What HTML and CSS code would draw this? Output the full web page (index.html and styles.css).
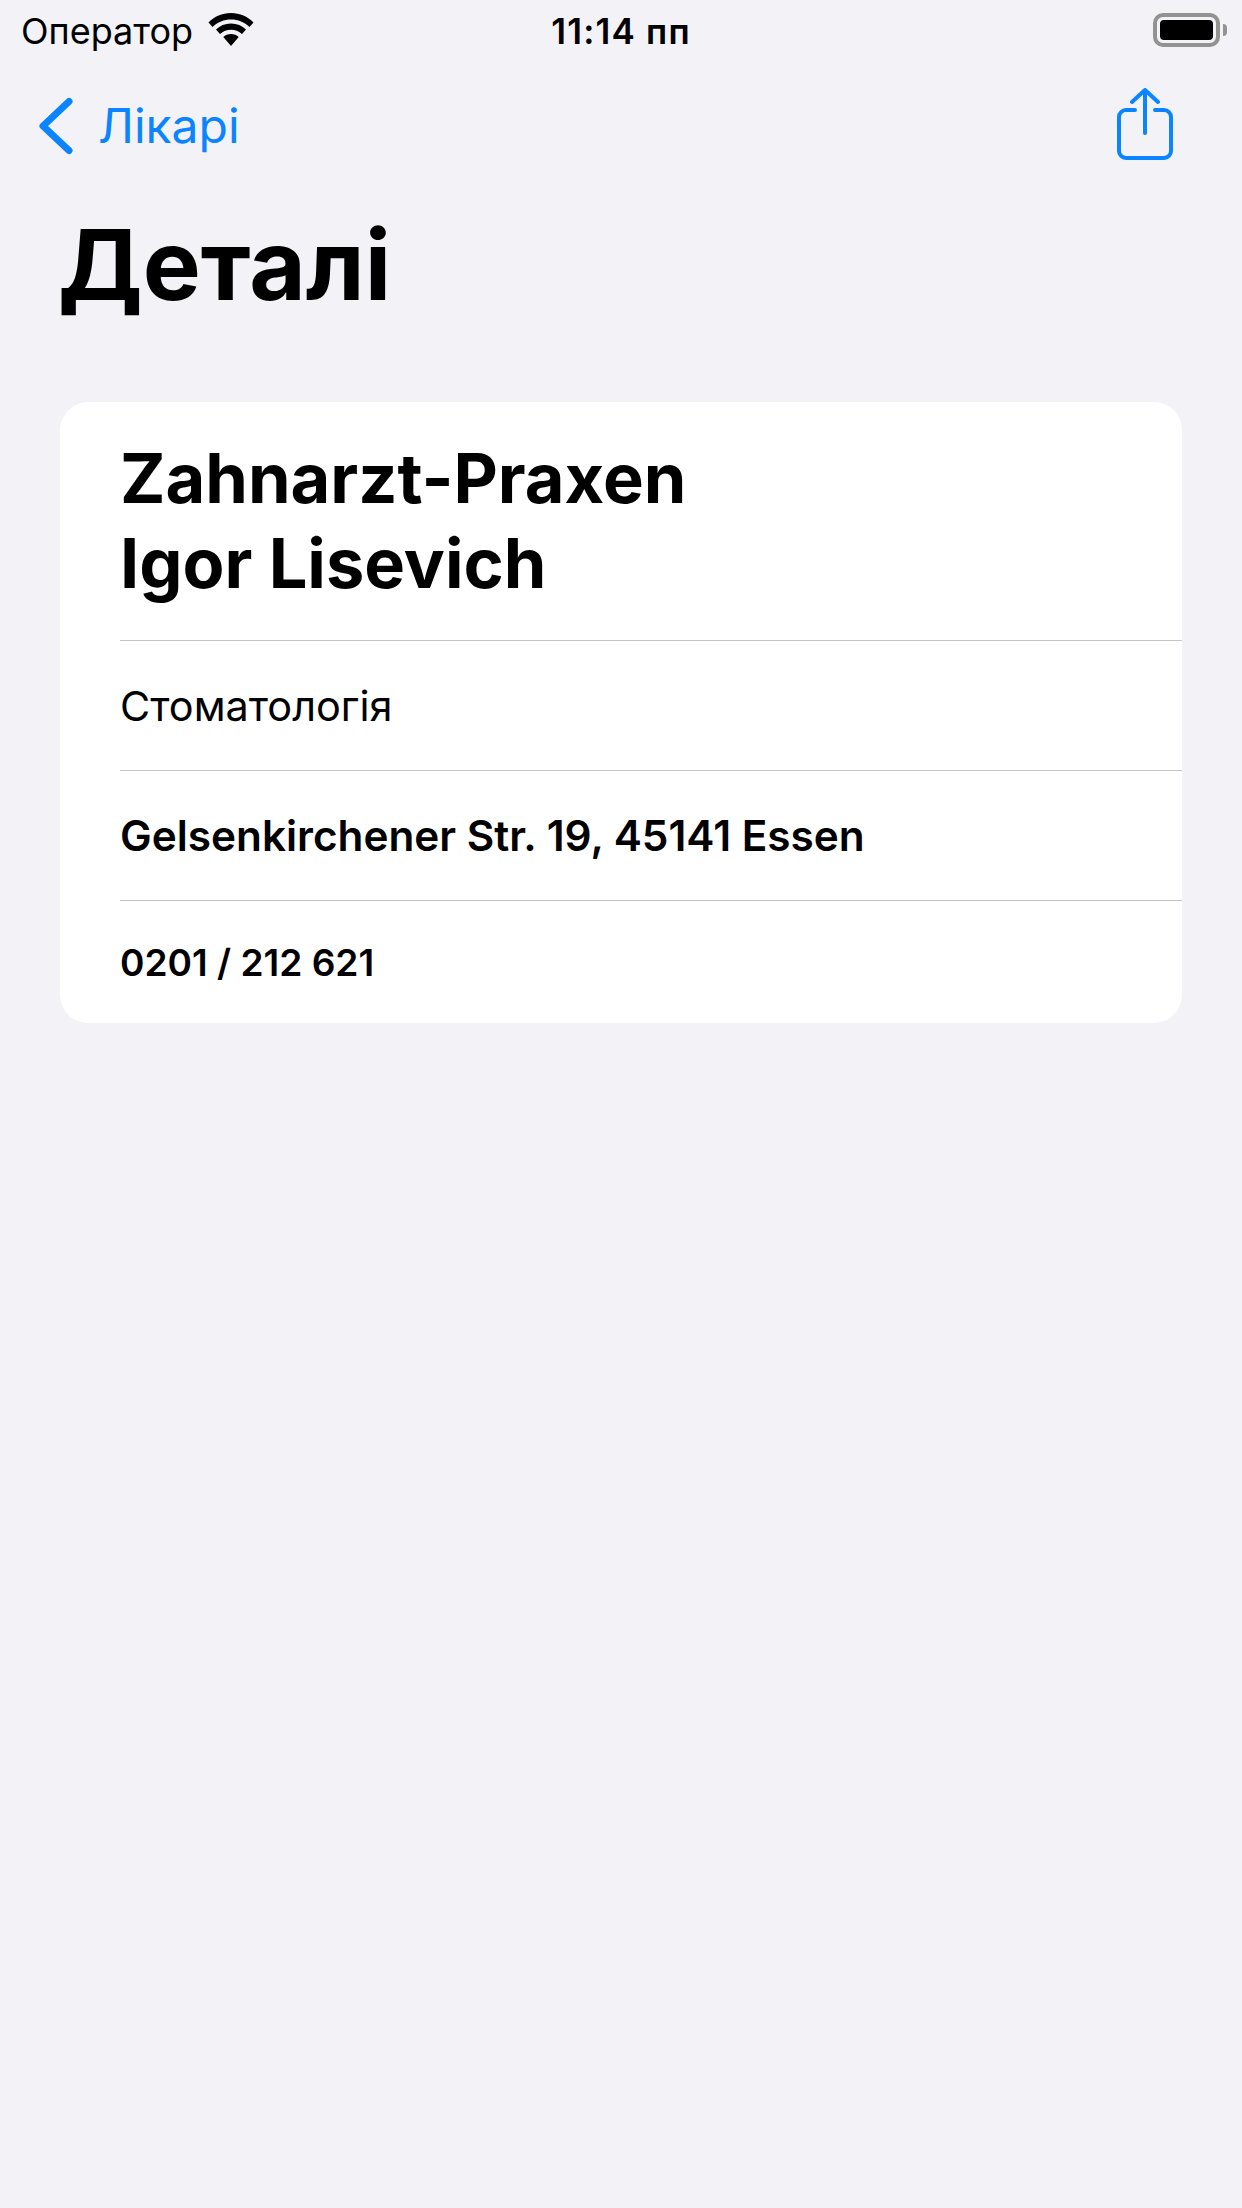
FILE: index.html
```html
<!DOCTYPE html>
<html lang="uk">
<head>
<meta charset="utf-8">
<title>Деталі</title>
<link rel="stylesheet" href="styles.css">
</head>
<body>
<div class="status">
  <div class="status-left">
    <span class="carrier">Оператор</span>
    <svg class="wifi" width="46" height="33" viewBox="0 0 46 33"><path fill="#000" d="M23 0C14 0 6.500 3.500 .5 9.500L4.500 14C9.500 9 16 6.500 23 6.500S36.500 9 41.500 14L45.500 9.500C39.500 3.500 32 0 23 0zM23 10.500C17 10.500 12 12.500 8 16.500L12 21C15 18.300 19 16.800 23 16.800S31 18.300 34 21L38 16.500C34 12.500 29 10.500 23 10.500zM23 21C19.800 21 17.300 22 15.300 24L23 33 30.700 24C28.700 22 26.200 21 23 21z"/></svg>
  </div>
  <span class="clock">11:14 пп</span>
  <div class="status-right">
    <div class="battery"><div class="battery-fill"></div></div>
    <div class="battery-cap"></div>
  </div>
</div>
<nav class="nav">
  <div class="back">
    <svg class="chevron" width="36" height="58" viewBox="0 0 36 58"><path d="M32 4.500 6 29l26 24.500" fill="none" stroke="#0a84ff" stroke-width="7" stroke-linecap="round" stroke-linejoin="round"/></svg>
    <span class="back-label">Лікарі</span>
  </div>
  <svg class="share" width="56" height="72" viewBox="0 0 56 72"><g fill="none" stroke="#0a84ff" stroke-width="4" stroke-linecap="round" stroke-linejoin="round"><path d="M18 22H9a7 7 0 0 0-7 7v34a7 7 0 0 0 7 7h38a7 7 0 0 0 7-7V29a7 7 0 0 0-7-7h-9"/><path d="M28 45V3"/><path d="M15 14 28 2l13 12"/></g></svg>
</nav>
<h1 class="title">Деталі</h1>
<main class="card">
  <div class="row row-name">Zahnarzt-Praxen<br>Igor Lisevich</div>
  <div class="row row-spec">Стоматологія</div>
  <div class="row row-addr">Gelsenkirchener Str. 19, 45141 Essen</div>
  <div class="row row-phone">0201 / 212 621</div>
</main>
</body>
</html>
```
FILE: styles.css
```css
* { box-sizing: border-box; }
html, body { margin: 0; height: 100%; }
body {
  width: 1242px;
  height: 2208px;
  background: #f2f2f7;
  color: #000;
  font-family: Inter, "Noto Sans", sans-serif;
  overflow: hidden;
}
.status {
  height: 60px;
  display: flex;
  align-items: center;
  justify-content: space-between;
  padding: 0 15px 0 21px;
  position: relative;
}
.status-left { display: flex; align-items: center; gap: 15px; }
.carrier { font-size: 36px; line-height: 40px; margin-top: 1px; }
.wifi { margin-top: -1px; }
.clock {
  position: absolute;
  left: 0;
  right: 0;
  top: 9px;
  text-align: center;
  font-size: 35px;
  line-height: 44px;
  font-weight: 600;
  letter-spacing: 1.2px;
}
.status-right { display: flex; align-items: center; gap: 3px; }
.battery {
  width: 67px;
  height: 34px;
  border: 4px solid #929292;
  border-radius: 10px;
  padding: 3px;
  background: #f2f2f7;
}
.battery-fill { width: 100%; height: 100%; background: #000; border-radius: 4px; }
.battery-cap {
  width: 4px;
  height: 12px;
  background: #929292;
  border-radius: 0 6px 6px 0;
}
.nav {
  height: 130px;
  display: flex;
  align-items: center;
  justify-content: space-between;
  padding: 0 69px 0 37px;
}
.back { display: flex; align-items: center; gap: 25px; margin-top: 2px; }
.chevron { display: block; }
.back-label { color: #0a84ff; font-size: 48px; line-height: 56px; }
.share { display: block; margin-top: -2px; }
.title {
  margin: 0;
  padding: 17px 0 0 58px;
  font-size: 97.5px;
  line-height: 116px;
  font-weight: 700;
}
.card {
  margin: 79px 60px 0;
  background: #fff;
  border-radius: 28px;
  padding-left: 60px;
  height: 621px;
}
.row { border-bottom: 1px solid #c6c6c8; display: flex; align-items: center; }
.row:last-child { border-bottom: 0; }
.row-name {
  display: block;
  height: 239px;
  padding-top: 34px;
  font-size: 68.5px;
  line-height: 85px;
  font-weight: 700;
}
.row-spec { height: 130px; font-size: 41.4px; }
.row-addr { height: 130px; font-size: 42.3px; font-weight: 600; }
.row-phone { height: 122px; font-size: 37.1px; font-weight: 600; }
```
